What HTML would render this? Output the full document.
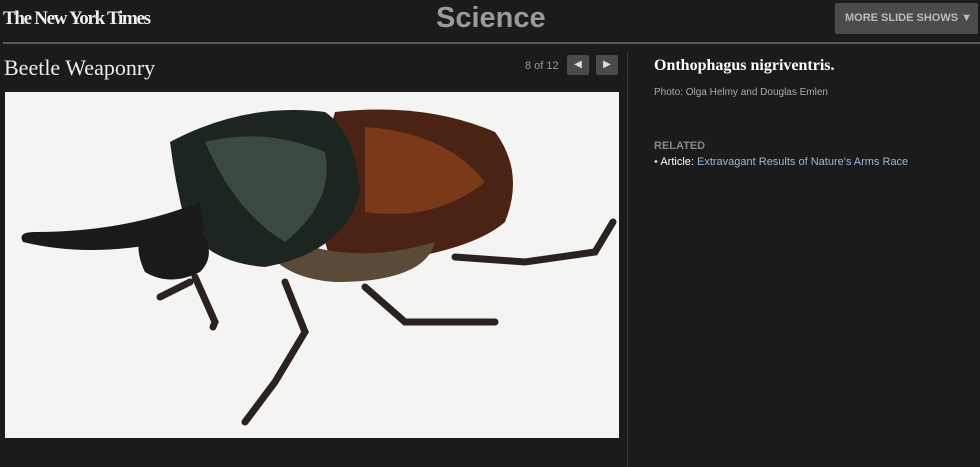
<!DOCTYPE html>
<html><head><meta charset="utf-8"><style>
body{margin:0;width:980px;height:467px;background:#1b1b1b;overflow:hidden;font-family:"Liberation Sans",sans-serif;position:relative}
.a{position:absolute}
</style></head><body>
<div class="a" style="left:3px;top:8px;font-family:'Liberation Serif',serif;font-size:19px;color:#eee;font-weight:bold;letter-spacing:-1.3px">The New York Times</div>
<div class="a" style="left:436px;top:2px;font-size:29px;color:#9a9a9a;font-weight:bold">Science</div>
<div class="a" style="left:835px;top:3px;width:143px;height:31px;background:#4b4b4b;border-radius:2px;color:#bbb;font-size:11px;font-weight:bold;line-height:31px;text-indent:10px">MORE SLIDE SHOWS &#9660;</div>
<div class="a" style="left:3px;top:42px;width:977px;height:2px;background:#5a5a5a"></div>
<div class="a" style="left:627px;top:52px;width:1px;height:415px;background:#3a3a3a"></div>
<div class="a" style="left:4px;top:55px;font-family:'Liberation Serif',serif;font-size:22px;color:#eee">Beetle Weaponry</div>
<div class="a" style="left:525px;top:60px;font-size:11px;color:#999">8 of 12</div>
<div class="a" style="left:567px;top:55px;width:22px;height:20px;background:#4b4b4b;border-radius:2px;color:#ddd;font-size:10px;text-align:center;line-height:20px">&#9664;</div>
<div class="a" style="left:596px;top:55px;width:22px;height:20px;background:#4b4b4b;border-radius:2px;color:#ddd;font-size:10px;text-align:center;line-height:20px">&#9654;</div>
<div class="a" style="left:654px;top:57px;font-family:'Liberation Serif',serif;font-size:16px;color:#fff;font-weight:bold">Onthophagus nigriventris.</div>
<div class="a" style="left:654px;top:87px;font-size:10px;color:#aaa">Photo: Olga Helmy and Douglas Emlen</div>
<div class="a" style="left:654px;top:140px;font-size:11px;color:#888;font-weight:bold">RELATED</div>
<div class="a" style="left:654px;top:156px;font-size:11px;color:#9ab8d8"><span style="color:#ccc">• </span><span style="color:#fff">Article:</span> Extravagant Results of Nature's Arms Race</div>
<svg class="a" style="left:5px;top:92px" width="614" height="346" viewBox="0 0 614 346">
<rect width="614" height="346" fill="#f4f4f2"/>
<g stroke="#2a2220" stroke-width="7" fill="none" stroke-linecap="round">
<path d="M450 165 L520 170 L590 160 L608 130"/>
<path d="M360 195 L400 230 L490 230"/>
<path d="M280 190 L300 240 L270 290 L240 330"/>
<path d="M190 185 L210 230 L208 235"/>
<path d="M185 190 L155 205"/>
</g>
<path d="M330 20 Q420 10 490 40 Q520 80 500 130 Q460 165 330 175 Q300 120 330 20Z" fill="#4a2314"/>
<path d="M360 35 Q440 40 480 90 Q430 130 360 120Z" fill="#7a3a1a"/>
<path d="M250 130 Q330 180 430 150 Q420 190 330 190 Q260 185 250 130Z" fill="#5a4a38"/>
<path d="M165 50 Q240 10 320 20 Q350 40 355 100 Q340 160 260 175 Q200 170 180 130 Q170 90 165 50Z" fill="#1c2520"/>
<path d="M200 50 Q260 35 320 60 Q330 110 280 150 Q230 120 200 50Z" fill="#3a4a40"/>
<path d="M135 140 Q150 120 190 130 Q215 160 195 180 Q165 195 140 180 Q130 160 135 140Z" fill="#1a1a1a"/>
<path d="M195 110 Q120 140 30 140 Q12 140 18 150 Q100 170 200 140Z" fill="#1a1a1a"/>
</svg>
</body></html>
